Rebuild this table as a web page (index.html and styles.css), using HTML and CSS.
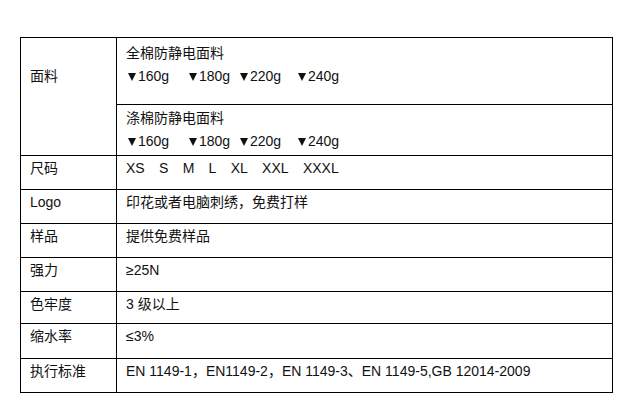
FILE: index.html
```html
<!DOCTYPE html>
<html lang="zh-CN">
<head>
<meta charset="utf-8">
<title>面料参数</title>
<link rel="stylesheet" href="styles.css">
</head>
<body>
<div class="spec">
  <div class="cell label label-fabric">面料</div>
  <div class="fabric">
    <div class="sub sub-1">
      <div class="line">全棉防静电面料</div>
      <div class="line weights"><span class="w w1"><i class="tri"></i>160g</span><span class="w w2"><i class="tri"></i>180g</span><span class="w w3"><i class="tri"></i>220g</span><span class="w"><i class="tri"></i>240g</span></div>
    </div>
    <div class="sub sub-2">
      <div class="line">涤棉防静电面料</div>
      <div class="line weights"><span class="w w1"><i class="tri"></i>160g</span><span class="w w2"><i class="tri"></i>180g</span><span class="w w3"><i class="tri"></i>220g</span><span class="w"><i class="tri"></i>240g</span></div>
    </div>
  </div>

  <div class="cell label r34">尺码</div>
  <div class="cell value r34 sizes"><span>XS</span><span>S</span><span>M</span><span>L</span><span>XL</span><span>XXL</span><span>XXXL</span></div>

  <div class="cell label r34">Logo</div>
  <div class="cell value r34">印花或者电脑刺绣，免费打样</div>

  <div class="cell label r34">样品</div>
  <div class="cell value r34">提供免费样品</div>

  <div class="cell label r34">强力</div>
  <div class="cell value r34">≥25N</div>

  <div class="cell label r32">色牢度</div>
  <div class="cell value r32">3 级以上</div>

  <div class="cell label r35">缩水率</div>
  <div class="cell value r35">≤3%</div>

  <div class="cell label r34">执行标准</div>
  <div class="cell value r34">EN 1149-1，EN1149-2，EN 1149-3、EN 1149-5,GB 12014-2009</div>
</div>
</body>
</html>
```

FILE: styles.css
```css
html, body {
  margin: 0;
  padding: 0;
  background: #ffffff;
}

body {
  font-family: "Liberation Sans", Arial, "Noto Sans CJK SC", sans-serif;
  font-size: 14px;
  color: #111111;
}

.spec {
  display: grid;
  grid-template-columns: 96px 496px;
  width: 593px;
  margin: 37px 0 0 20px;
  border-top: 1px solid #000;
  border-left: 1px solid #000;
  box-sizing: border-box;
}

.cell,
.sub {
  box-sizing: border-box;
  border-right: 1px solid #000;
  border-bottom: 1px solid #000;
  line-height: 20px;
  padding-top: 2px;
  white-space: nowrap;
}

.label {
  padding-left: 9px;
}

.value {
  padding-left: 9px;
}

.label-fabric {
  height: 118px;
  padding-top: 28px;
}

.fabric {
  display: flex;
  flex-direction: column;
}

.sub {
  padding-left: 9px;
}

.sub .line {
  line-height: 23px;
}

.sub-1 {
  height: 67px;
  padding-top: 4px;
}

.sub-2 {
  height: 51px;
  padding-top: 2px;
}

.weights {
  display: flex;
}

.w1 { width: 61px; }
.w2 { width: 51px; }
.w3 { width: 58px; }

.tri {
  display: inline-block;
  width: 0;
  height: 0;
  margin: 0 2px 0 2px;
  border-left: 4.5px solid transparent;
  border-right: 4.5px solid transparent;
  border-top: 8px solid #111111;
  vertical-align: baseline;
}

.r34 { height: 34px; }
.r32 { height: 32px; }
.r35 { height: 35px; }

.sizes {
  display: flex;
  gap: 14.3px;
}
```
